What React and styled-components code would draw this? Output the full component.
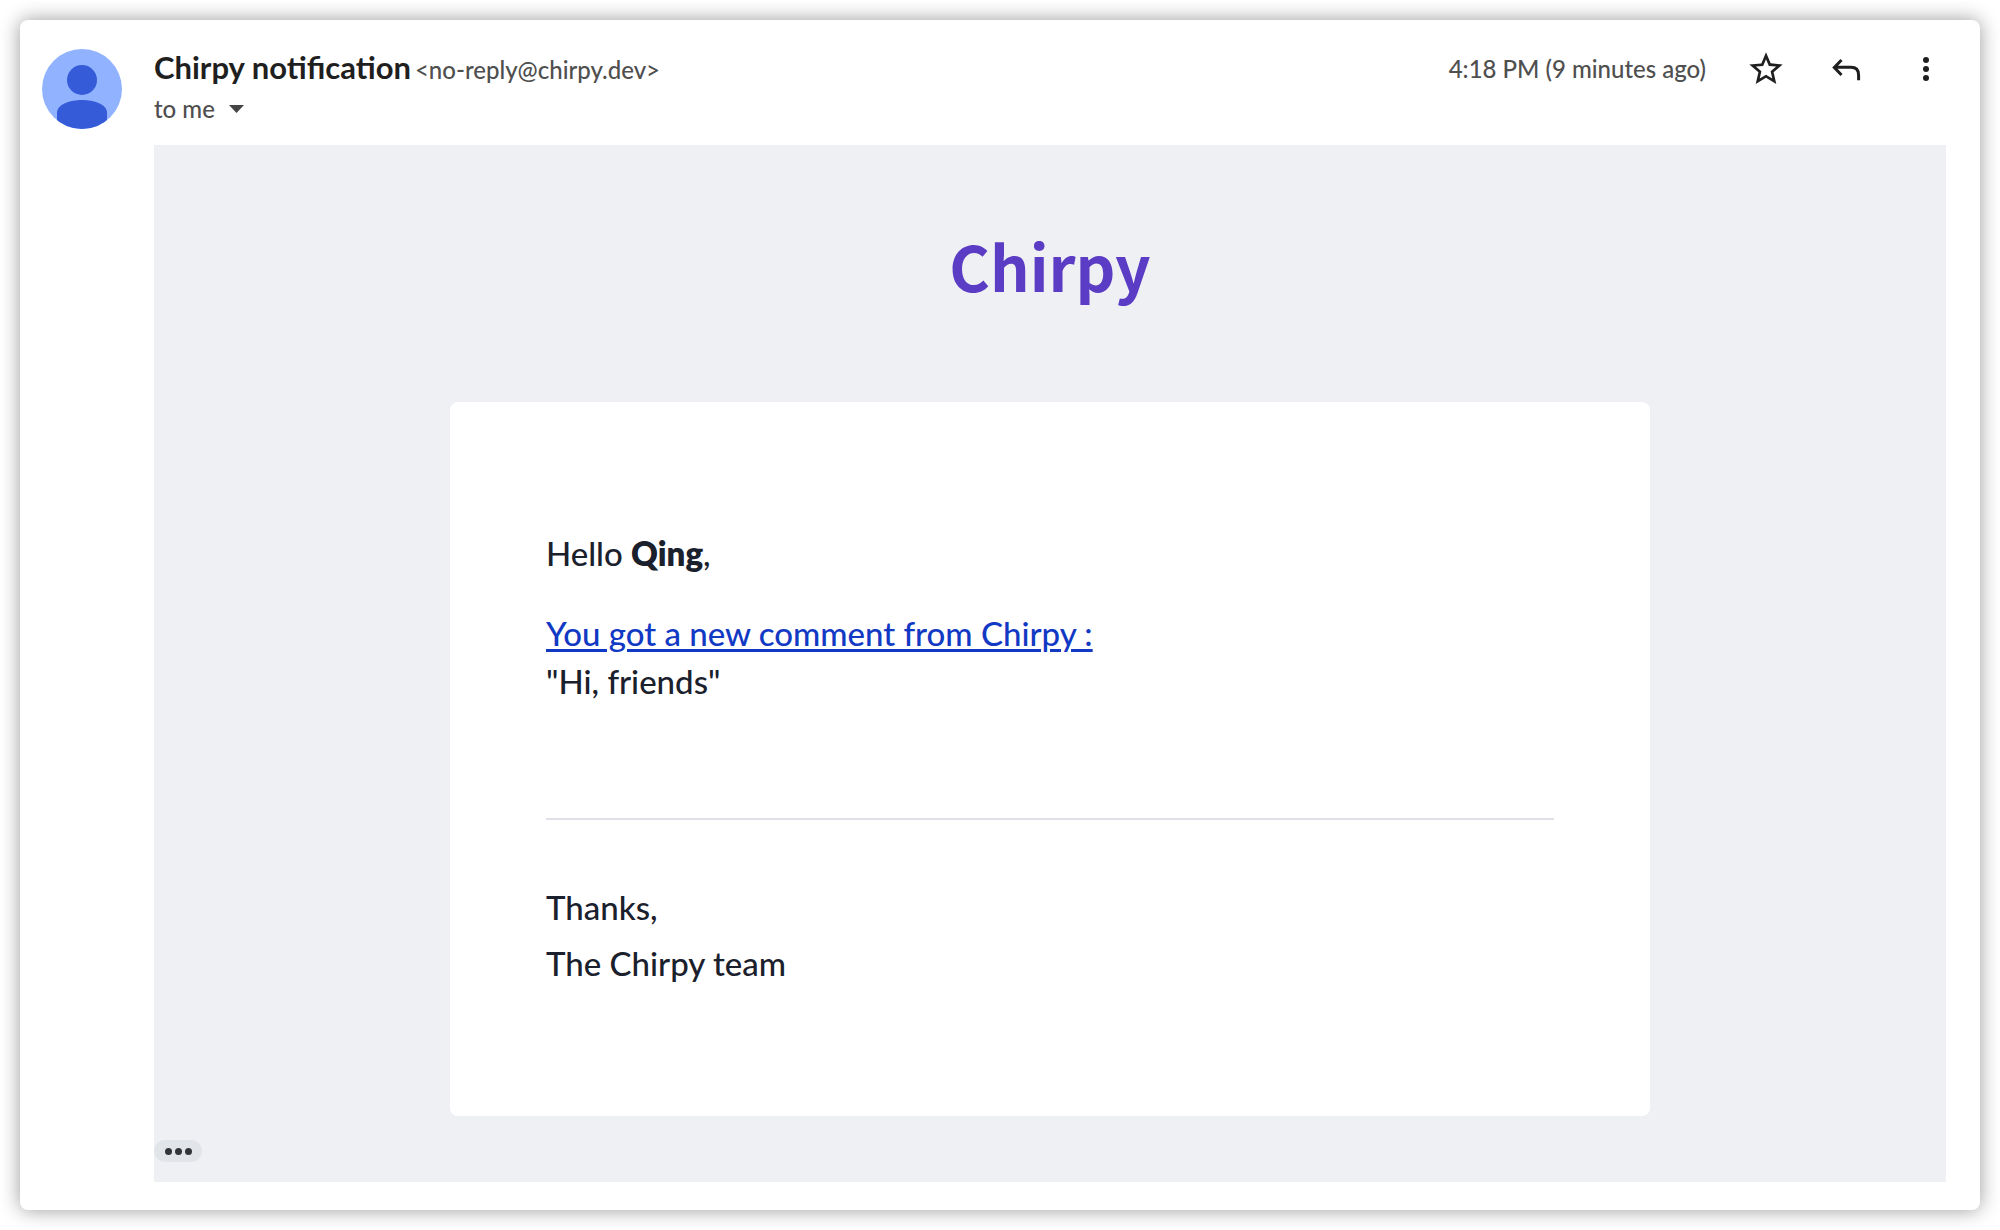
import React from "react";
import styled, { createGlobalStyle } from "styled-components";

const GlobalStyle = createGlobalStyle`
  *, *::before, *::after { box-sizing: border-box; }
  body {
    margin: 0;
    background: #fff;
    font-family: Lato, "Liberation Sans", sans-serif;
    font-weight: 500;
    color: #1a202c;
  }
`;

const Page = styled.main`
  padding: 20px;
`;

const Message = styled.article`
  display: grid;
  grid-template-columns: 80px 1fr;
  column-gap: 32px;
  row-gap: 16px;
  padding: 29px 34px 28px 22px;
  background: #fff;
  border-radius: 8px;
  box-shadow: 0 0 20px rgba(0, 0, 0, 0.4);
`;

const Avatar = styled.svg`
  display: block;
  width: 80px;
  height: 80px;
`;

const Header = styled.header`
  display: flex;
  justify-content: space-between;
  align-items: flex-start;
`;

const Line = styled.div`
  display: flex;
  align-items: baseline;
  gap: 4px;
  height: 40px;
`;

const SenderName = styled.h2`
  margin: 0;
  font-size: 31px;
  font-weight: 700;
  line-height: 36px;
  color: #1f1f1f;
`;

const Meta = styled.span`
  font-size: 24px;
  line-height: 36px;
  color: #4f4f4f;
`;

const Recipient = styled.button`
  display: flex;
  align-items: center;
  gap: 14px;
  padding: 0;
  border: 0;
  background: none;
  font: 500 24px/40px Lato, "Liberation Sans", sans-serif;
  color: #4f4f4f;
`;

const Caret = styled.svg`
  width: 15px;
  height: 8px;
  fill: #444;
`;

const Actions = styled.div`
  display: flex;
  align-items: center;
  gap: 40px;
`;

const IconButton = styled.button`
  display: flex;
  padding: 0;
  border: 0;
  background: none;
  color: #1f1f1f;

  svg {
    width: 40px;
    height: 40px;
    fill: currentColor;
  }
`;

const Body = styled.section`
  grid-column: 2;
  display: flex;
  flex-direction: column;
  padding-bottom: 20px;
  background: #eff0f4;
`;

const Brand = styled.h1`
  margin: 0;
  padding: 69px 0 85px;
  text-align: center;
  font: 700 62px/103px "Noto Sans CJK JP", "Noto Sans", sans-serif;
  color: #5b3cc4;
`;

const Card = styled.div`
  width: 100%;
  max-width: 1200px;
  margin: 0 auto 24px;
  padding: 95px 96px 97px;
  border-radius: 8px;
  background: #fff;
  font-size: 33px;
  line-height: 48px;
`;

const Paragraph = styled.p`
  margin: 32px 0;
`;

const Strong = styled.strong`
  font-weight: 800;
`;

const CommentLink = styled.a`
  color: #1139c4;
  text-decoration-thickness: 3px;
  text-underline-offset: 3px;
`;

const Divider = styled.hr`
  height: 2px;
  margin: 113px 0 59px;
  border: 0;
  background: #e0e0e8;
`;

const SignOff = styled.p`
  margin: 0 0 28px;
  line-height: 56px;
`;

const TrimmedToggle = styled.button`
  display: flex;
  align-items: center;
  justify-content: center;
  gap: 3px;
  width: 48px;
  height: 22px;
  padding: 0;
  border: 0;
  border-radius: 11px;
  background: #e1e5e9;
`;

const Dot = styled.span`
  width: 7px;
  height: 7px;
  border-radius: 50%;
  background: #333438;
`;

export default function App() {
  return (
    <>
      <GlobalStyle />
      <Page>
        <Message>
          <Avatar viewBox="0 0 80 80" aria-hidden="true">
            <defs>
              <clipPath id="avatar-clip">
                <circle cx="40" cy="40" r="40" />
              </clipPath>
            </defs>
            <g clipPath="url(#avatar-clip)">
              <rect width="80" height="80" fill="#91b3ff" />
              <circle cx="40" cy="31" r="15" fill="#355bd9" />
              <path d="M15 80V64C15 55 28 51 40 51S65 55 65 64V80Z" fill="#355bd9" />
            </g>
          </Avatar>
          <Header>
            <div>
              <Line>
                <SenderName>Chirpy notification</SenderName>
                <Meta>&lt;no-reply@chirpy.dev&gt;</Meta>
              </Line>
              <Recipient type="button">
                to me
                <Caret viewBox="0 0 15 8" aria-hidden="true">
                  <path d="M0 0H15L7.500 8Z" />
                </Caret>
              </Recipient>
            </div>
            <Actions>
              <Meta>4:18 PM (9 minutes ago)</Meta>
              <IconButton type="button" aria-label="Star">
                <svg viewBox="0 0 24 24">
                  <path d="M22 9.240l-7.190-.620L12 2 9.190 8.630 2 9.240l5.460 4.730L5.820 21 12 17.270 18.180 21l-1.630-7.030L22 9.240zM12 15.400l-3.760 2.270 1-4.280-3.320-2.880 4.380-.380L12 6.100l1.710 4.040 4.380.380-3.320 2.880 1 4.280L12 15.400z" />
                </svg>
              </IconButton>
              <IconButton type="button" aria-label="Reply">
                <svg viewBox="0 0 40 40">
                  <path
                    d="M15.500 11L8.300 18.500L15.500 26M8.300 18.300H25Q32.600 18.300 32.600 26V31.300"
                    fill="none"
                    stroke="currentColor"
                    strokeWidth="3"
                  />
                </svg>
              </IconButton>
              <IconButton type="button" aria-label="More">
                <svg viewBox="0 0 40 40">
                  <circle cx="20" cy="11" r="3" />
                  <circle cx="20" cy="20" r="3" />
                  <circle cx="20" cy="29" r="3" />
                </svg>
              </IconButton>
            </Actions>
          </Header>
          <Body>
            <Brand>Chirpy</Brand>
            <Card>
              <Paragraph>
                Hello <Strong>Qing</Strong>,
              </Paragraph>
              <Paragraph>
                <CommentLink href="#comment">You got a new comment from Chirpy :</CommentLink>
                <br />
                "Hi, friends"
              </Paragraph>
              <Divider />
              <SignOff>
                Thanks,
                <br />
                The Chirpy team
              </SignOff>
            </Card>
            <TrimmedToggle type="button" aria-label="Show trimmed content">
              <Dot />
              <Dot />
              <Dot />
            </TrimmedToggle>
          </Body>
        </Message>
      </Page>
    </>
  );
}
